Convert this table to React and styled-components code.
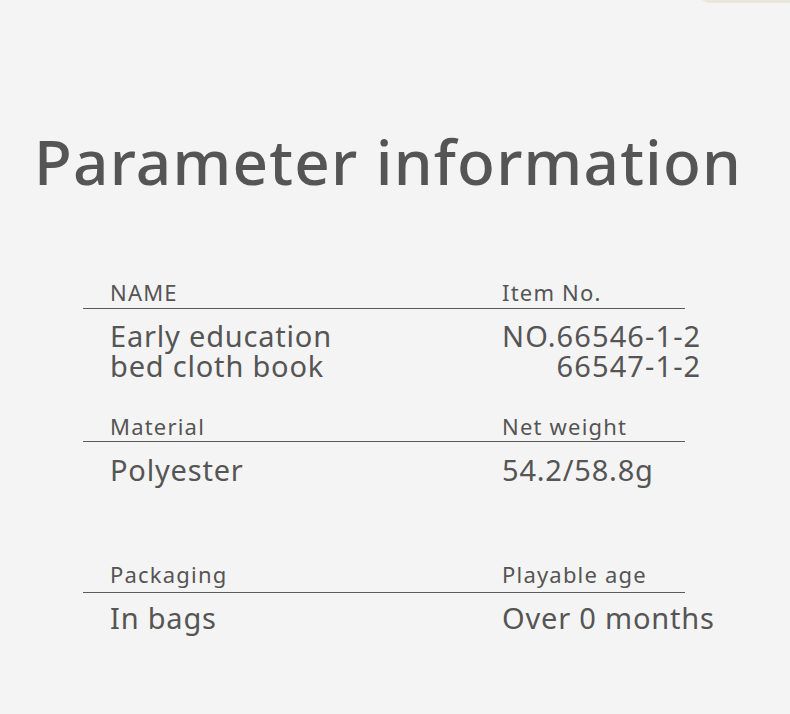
import React from "react";
import styled, { createGlobalStyle } from "styled-components";

const GlobalStyle = createGlobalStyle`
  html, body {
    margin: 0;
    padding: 0;
    background: #f4f4f4;
  }
  body {
    font-family: "Noto Sans", "Open Sans", sans-serif;
    color: #555555;
  }
`;

const Page = styled.div`
  position: relative;
  width: 790px;
  height: 714px;
  overflow: hidden;
  background: #f4f4f4;
  padding-top: 130px;
  box-sizing: border-box;
`;

const Corner = styled.div`
  position: absolute;
  top: -6px;
  right: -10px;
  width: 100px;
  height: 9px;
  border-radius: 0 0 4px 50px;
  background: #e9e6dc;
`;

const Title = styled.h1`
  margin: 0 0 0 34px;
  font-size: 62px;
  line-height: 62px;
  font-weight: 500;
  color: #555555;
  letter-spacing: 1.2px;
`;

const Table = styled.div`
  margin-top: 88px;
  margin-left: 83px;
  width: 602px;
`;

const Group = styled.div`
  margin-top: ${(p) => p.$gap || 0}px;
`;

const LabelRow = styled.div`
  display: grid;
  grid-template-columns: 392px 1fr;
  padding: 0 0 ${(p) => p.$pad || 4}px 27px;
  border-bottom: 1.5px solid #5a5a5a;
`;

const Label = styled.div`
  font-size: 22px;
  line-height: 24px;
  letter-spacing: 1.2px;
  color: #555555;
`;

const ValueRow = styled.div`
  display: grid;
  grid-template-columns: 392px auto;
  justify-content: start;
  padding-left: 27px;
  margin-top: ${(p) => p.$top || 12}px;
`;

const Value = styled.div`
  font-size: 29px;
  line-height: 29.5px;
  letter-spacing: ${(p) => (p.$right ? "1.1px" : "0.8px")};
  color: #555555;
  white-space: pre;
  text-align: ${(p) => (p.$right ? "right" : "left")};
`;

const rows = [
  {
    gap: 0,
    pad: 4,
    top: 12,
    left: ["NAME", "Early education\nbed cloth book"],
    right: ["Item No.", "NO.66546-1-2\n66547-1-2"],
    alignRight: true,
  },
  {
    gap: 34,
    pad: 3,
    top: 13,
    left: ["Material", "Polyester"],
    right: ["Net weight", "54.2/58.8g"],
  },
  {
    gap: 77,
    pad: 6,
    top: 10,
    left: ["Packaging", "In bags"],
    right: ["Playable age", "Over 0 months"],
  },
];

export default function App() {
  return (
    <>
      <GlobalStyle />
      <Page>
        <Corner />
        <Title>Parameter information</Title>
        <Table>
          {rows.map((row) => (
            <Group key={row.left[0]} $gap={row.gap}>
              <LabelRow $pad={row.pad}>
                <Label>{row.left[0]}</Label>
                <Label>{row.right[0]}</Label>
              </LabelRow>
              <ValueRow $top={row.top}>
                <Value>{row.left[1]}</Value>
                <Value $right={row.alignRight}>{row.right[1]}</Value>
              </ValueRow>
            </Group>
          ))}
        </Table>
      </Page>
    </>
  );
}
